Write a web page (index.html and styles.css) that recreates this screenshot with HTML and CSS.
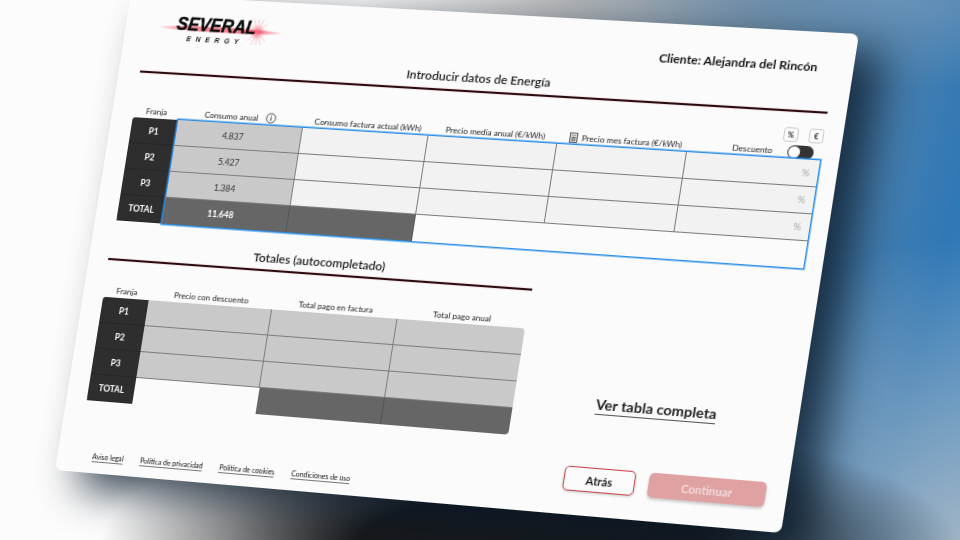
FILE: index.html
```html
<!DOCTYPE html>
<html>

<head>
    <title>Several Energy - Introducir datos</title>
    <link rel="stylesheet" href="styles.css">
</head>

<body>
    <div class="stage">
        <div class="card">
            <div class="top">
                <svg class="logo" width="128" height="34" viewBox="0 0 128 34">
                    <defs>
                        <linearGradient id="flare" x1="0" y1="0" x2="1" y2="0">
                            <stop offset="0" stop-color="#ee3c55" stop-opacity="0" />
                            <stop offset="0.2" stop-color="#ee3c55" stop-opacity="0.55" />
                            <stop offset="0.8" stop-color="#ee3c55" stop-opacity="0.7" />
                            <stop offset="1" stop-color="#ee3c55" stop-opacity="0" />
                        </linearGradient>
                        <radialGradient id="burst">
                            <stop offset="0" stop-color="#ef3a52" stop-opacity="0.9" />
                            <stop offset="0.5" stop-color="#f4566c" stop-opacity="0.4" />
                            <stop offset="1" stop-color="#f4566c" stop-opacity="0" />
                        </radialGradient>
                    </defs>
                    <ellipse cx="64" cy="19" rx="64" ry="2.6" fill="url(#flare)" />
                    <circle cx="102" cy="19" r="8" fill="url(#burst)" />
                    <g stroke="#f58b9a" stroke-width="0.6" opacity="0.75">
                        <path d="M102 6 L102 32 M93 10 L111 28 M111 10 L93 28 M97 6 L107 32 M107 6 L97 32" />
                    </g>
                    <text class="logo-name" x="19" y="21" textLength="81" lengthAdjust="spacingAndGlyphs">SEVERAL</text>
                    <text class="logo-sub" x="31" y="32">ENERGY</text>
                </svg>
                <div class="client">Cliente: Alejandra del Rincón</div>
            </div>

            <h2 class="title title-wide">Introducir datos de Energía</h2>
            <div class="rule rule-wide"></div>

            <div class="heads heads-five">
                <div class="head">Franja</div>
                <div class="head">Consumo anual
                    <svg class="ico ico-info" width="11" height="11" viewBox="0 0 11 11">
                        <circle cx="5.5" cy="5.5" r="4.6" fill="none" stroke="#222" stroke-width="0.8" />
                        <path d="M5.5 4.7 V8 M5.5 2.8 V3.7" stroke="#222" stroke-width="0.9" />
                    </svg>
                </div>
                <div class="head head-shift">Consumo factura actual (kWh)</div>
                <div class="head head-shift">Precio media anual (€/kWh)</div>
                <div class="head head-shift">
                    <svg class="ico" width="8" height="10" viewBox="0 0 8 10">
                        <rect x="0.5" y="0.5" width="7" height="9" fill="none" stroke="#333" stroke-width="0.8" />
                        <path d="M1.5 2.5 H6.5 M1.5 4.5 H6.5 M1.5 6 H6.5 M1.5 7.7 H6.5 M3 4 V8.3 M5 4 V8.3" stroke="#333" stroke-width="0.6" />
                    </svg>
                    Precio mes factura (€/kWh)
                </div>
                <div class="discount">
                    <div class="units">
                        <span class="unit">%</span>
                        <span class="unit">€</span>
                    </div>
                    <div class="discount-row">
                        <span class="head">Descuento</span>
                        <span class="toggle"><span class="knob"></span></span>
                    </div>
                </div>
            </div>

            <div class="table table-main">
                <div class="franjas">
                    <div>P1</div>
                    <div>P2</div>
                    <div>P3</div>
                    <div>TOTAL</div>
                </div>
                <div class="data data-five">
                    <div class="cell cell-fixed cell-num">4.837</div>
                    <div class="cell"></div>
                    <div class="cell"></div>
                    <div class="cell"></div>
                    <div class="cell cell-pct">%</div>

                    <div class="cell cell-fixed cell-num">5.427</div>
                    <div class="cell"></div>
                    <div class="cell"></div>
                    <div class="cell"></div>
                    <div class="cell cell-pct">%</div>

                    <div class="cell cell-fixed cell-num">1.384</div>
                    <div class="cell"></div>
                    <div class="cell"></div>
                    <div class="cell"></div>
                    <div class="cell cell-pct">%</div>

                    <div class="cell cell-total cell-num">11.648</div>
                    <div class="cell cell-total"></div>
                </div>
            </div>

            <div class="lower">
                <div class="totals">
                    <h2 class="title title-totals">Totales (autocompletado)</h2>
                    <div class="rule"></div>

                    <div class="heads heads-three">
                        <div class="head">Franja</div>
                        <div class="head">Precio con descuento</div>
                        <div class="head">Total pago en factura</div>
                        <div class="head">Total pago anual</div>
                    </div>

                    <div class="table table-totals">
                        <div class="franjas">
                            <div>P1</div>
                            <div>P2</div>
                            <div>P3</div>
                            <div>TOTAL</div>
                        </div>
                        <div class="data-three">
                            <div class="cell cell-fixed"></div>
                            <div class="cell cell-fixed"></div>
                            <div class="cell cell-fixed"></div>
                            <div class="cell cell-fixed"></div>
                            <div class="cell cell-fixed"></div>
                            <div class="cell cell-fixed"></div>
                            <div class="cell cell-fixed"></div>
                            <div class="cell cell-fixed"></div>
                            <div class="cell cell-fixed"></div>
                            <div></div>
                            <div class="cell cell-total"></div>
                            <div class="cell cell-total"></div>
                        </div>
                    </div>
                </div>
                <a class="full-table" href="#">Ver tabla completa</a>
            </div>

            <div class="footer">
                <div class="links">
                    <a href="#">Aviso legal</a>
                    <a href="#">Política de privacidad</a>
                    <a href="#">Política de cookies</a>
                    <a href="#">Condiciones de uso</a>
                </div>
                <div class="actions">
                    <button class="btn btn-back">Atrás</button>
                    <button class="btn btn-next">Continuar</button>
                </div>
            </div>
        </div>
    </div>
</body>

</html>
```

FILE: styles.css
```css
* {
    box-sizing: border-box;
}

body {
    margin: 0;
    font-family: Lato, "Open Sans", sans-serif;
    color: #222;
}

.stage {
    width: 960px;
    height: 540px;
    overflow: hidden;
    background:
        radial-gradient(ellipse 430px 125px at 530px 545px, rgba(24, 24, 26, 1) 40%, rgba(24, 24, 26, 0) 100%),
        radial-gradient(circle at 100% 100%, rgba(170, 185, 198, 0.9), rgba(170, 185, 198, 0) 300px),
        radial-gradient(ellipse 260px 90px at 900px 0, rgba(110, 150, 185, 0.8), rgba(110, 150, 185, 0) 100%),
        linear-gradient(104deg, #fcfcfc 0%, #fcfcfc 33%, #b4b6b8 52%, #6f8aa2 70%, #2f78b6 92%, #3d86c2 100%);
}

/* the whole card is tilted, numbers taken from the four corners */
.card {
    width: 720px;
    height: 480px;
    display: flex;
    flex-direction: column;
    padding: 12px 7px 12px 20px;
    background: #fbfbfb;
    border-radius: 7px;
    box-shadow: 26px 16px 42px rgba(8, 24, 40, 0.8);
    transform-origin: 0 0;
    transform: matrix3d(0.95644, 0.05339, 0, -0.00006364, -0.15858, 0.98954, 0, -0.000004517, 0, 0, 1, 0, 131, -6, 0, 1);
    will-change: transform;
}

.top {
    display: flex;
    align-items: center;
    justify-content: space-between;
    height: 34px;
}

.logo {
    margin-left: 13px;
}

.logo-name {
    font-family: "Liberation Sans", sans-serif;
    font-size: 18px;
    font-weight: bold;
    font-style: italic;
    fill: #0c0c0c;
    stroke: #0c0c0c;
    stroke-width: 0.4;
}

.logo-sub {
    font-family: "Liberation Sans", sans-serif;
    font-size: 7px;
    font-weight: bold;
    font-style: italic;
    letter-spacing: 4.8px;
    fill: #1a1a1a;
}

.client {
    margin-right: 27px;
    margin-top: 8px;
    font-size: 11.9px;
    font-weight: 700;
    color: #161618;
}

.title {
    margin: 10px 0 0;
    height: 16px;
    font-size: 12px;
    line-height: 16px;
    font-weight: 600;
    text-align: center;
}

.title-wide {
    width: 684px;
}

.title-totals {
    margin-top: 19px;
    width: 427px;
}

.rule {
    height: 2px;
    margin-top: 3px;
    background: #2b0b12;
    box-shadow: 0 0 1px #a33;
}

.rule-wide {
    width: 680px;
    margin-top: 4px;
    margin-left: 2px;
}

.heads {
    display: grid;
    align-items: end;
    text-align: center;
}

.heads-five {
    grid-template-columns: 47px repeat(5, 126.6px);
    height: 45px;
    width: 680px;
    margin-left: 2px;
}

.heads-three {
    grid-template-columns: 47px repeat(3, 126px);
    height: 37px;
    margin-left: 1px;
}

.head {
    font-size: 8.1px;
    line-height: 12px;
    padding-bottom: 1px;
    color: #222;
    white-space: nowrap;
}

.head-shift {
    padding-left: 3px;
}

.ico {
    vertical-align: -2px;
    margin: 0 2px;
}

.ico-info {
    margin-left: 5px;
}

.discount {
    display: flex;
    flex-direction: column;
    align-items: flex-end;
    gap: 3px;
}

.units {
    display: flex;
    gap: 10px;
}

.unit {
    width: 14px;
    height: 14px;
    border: 1px solid #ccc;
    border-radius: 3px;
    font-size: 7px;
    font-weight: 700;
    line-height: 12px;
    text-align: center;
}

.discount-row {
    display: flex;
    align-items: center;
    gap: 14px;
    margin-right: 7px;
}

.toggle {
    display: block;
    width: 25px;
    height: 13px;
    padding: 1px;
    border-radius: 7px;
    background: #333;
}

.knob {
    display: block;
    width: 11px;
    height: 11px;
    border-radius: 50%;
    background: #fff;
}

.table {
    display: flex;
    height: 104px;
}

.table-main {
    margin-left: 2px;
}

.table-totals {
    margin-left: 1px;
}

.franjas {
    width: 47px;
    display: grid;
    grid-template-rows: repeat(4, 26px);
    background: #2e2e2e;
    border-radius: 3px 0 0 3px;
    color: #fff;
    font-size: 8.5px;
    font-weight: 700;
}

.franjas div {
    display: flex;
    align-items: center;
    justify-content: center;
    border-bottom: 1px solid #262626;
}

.data-five {
    display: grid;
    grid-template-columns: repeat(5, 126.6px);
    grid-template-rows: repeat(4, 26px);
    box-shadow: 0 0 0 1.5px #2b8de6;
}

.data-three {
    display: grid;
    grid-template-columns: repeat(3, 126px);
    grid-template-rows: repeat(4, 26px);
    border-radius: 0 4px 4px 0;
    overflow: hidden;
}

.cell {
    display: flex;
    align-items: center;
    justify-content: center;
    background: #f2f2f2;
    border-right: 1px solid #7d7d7d;
    border-bottom: 1px solid #7d7d7d;
    font-size: 8.5px;
    color: #333;
}

.cell:nth-child(5n) {
    border-right: 0;
}

.cell-fixed {
    background: #c9c9c9;
}

.cell-num {
    padding-right: 10px;
}

.data-three .cell:nth-child(3n) {
    border-right: 0;
}

.data-three .cell:nth-child(5n):not(:nth-child(3n)) {
    border-right: 1px solid #7d7d7d;
}

.cell-pct {
    justify-content: flex-end;
    padding-right: 8px;
    font-size: 9px;
    color: #a8a8a8;
}

.cell-total {
    background: #666;
    color: #fff;
    font-weight: 700;
    border-color: #555;
    border-bottom: 0;
}

.lower {
    display: flex;
}

.totals {
    width: 427px;
}

.full-table {
    align-self: flex-end;
    margin-left: 79px;
    margin-bottom: 26px;
    border-bottom: 1px solid #555;
    font-size: 14px;
    font-weight: 700;
    line-height: 18px;
    color: #222;
    text-decoration: none;
    white-space: nowrap;
}

.footer {
    display: flex;
    align-items: flex-end;
    justify-content: space-between;
    margin-top: auto;
}

.links {
    display: flex;
    gap: 17px;
    margin-left: 16px;
    margin-bottom: -1px;
}

.links a {
    font-size: 6.9px;
    line-height: 9px;
    color: #111;
    text-decoration: none;
    border-bottom: 1px solid #777;
}

.actions {
    display: flex;
    gap: 13px;
    margin-right: 13px;
    margin-bottom: 11px;
}

.btn {
    height: 24px;
    border-radius: 5px;
    font-family: inherit;
    padding: 0;
}

.btn-back {
    width: 69px;
    background: #fafafa;
    border: 1.5px solid #c8444c;
    font-size: 11px;
    font-weight: 700;
    color: #222;
    box-shadow: 0 1px 3px rgba(0, 0, 0, 0.2);
}

.btn-next {
    width: 112px;
    background: #e0a1a3;
    border: 0;
    font-size: 11px;
    font-weight: 700;
    color: #f2d9d9;
    box-shadow: 0 2px 3px rgba(0, 0, 0, 0.2);
}
```
